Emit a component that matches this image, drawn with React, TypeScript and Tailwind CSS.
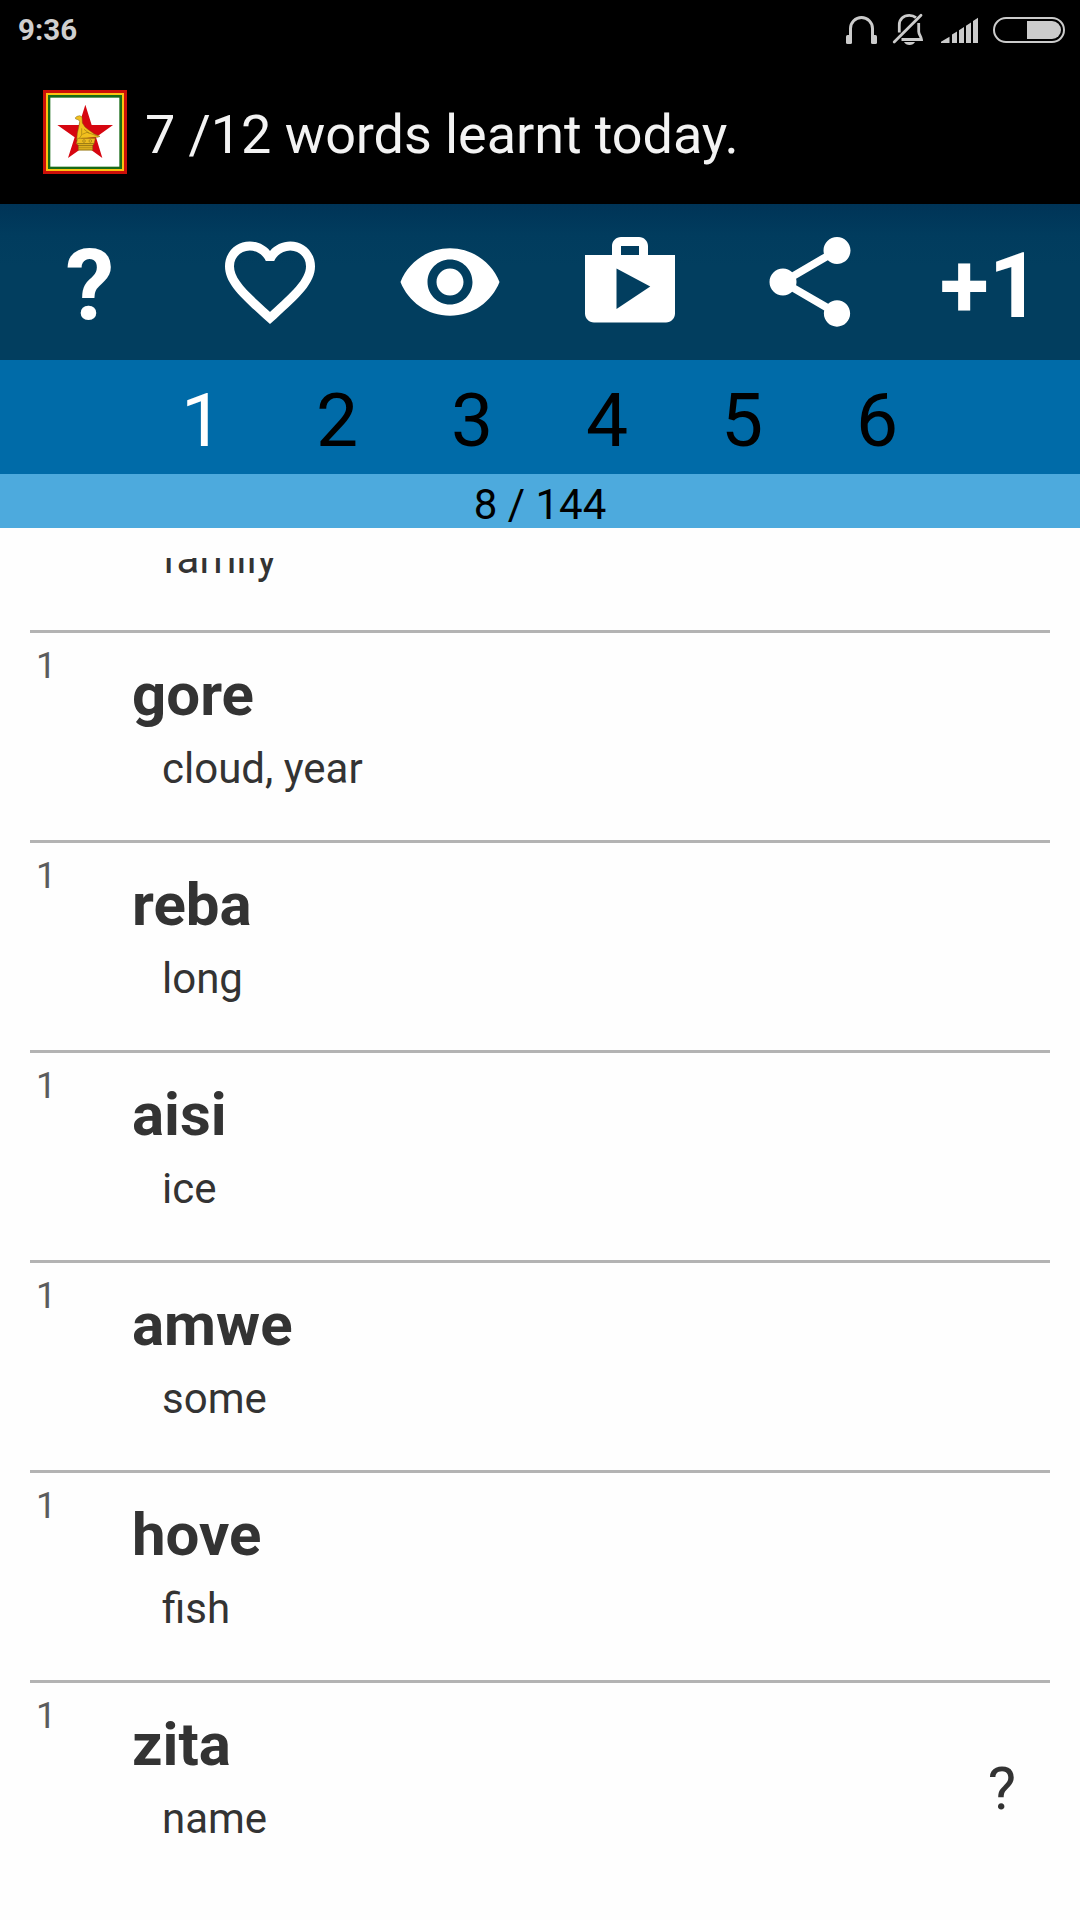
import { MdFavoriteBorder, MdShare, MdShop, MdVisibility } from 'react-icons/md';

interface Word {
  level: number;
  word: string;
  meaning: string;
  unsure?: boolean;
}

const words: Word[] = [
  { level: 1, word: 'gore', meaning: 'cloud, year' },
  { level: 1, word: 'reba', meaning: 'long' },
  { level: 1, word: 'aisi', meaning: 'ice' },
  { level: 1, word: 'amwe', meaning: 'some' },
  { level: 1, word: 'hove', meaning: 'fish' },
  { level: 1, word: 'zita', meaning: 'name', unsure: true },
];

const levels = [1, 2, 3, 4, 5, 6];
const activeLevel = 1;

function StatusIcons() {
  return (
    <svg width="260" height="60" viewBox="0 0 260 60" fill="#cbcbcb">
      {/* Headphones */}
      <path d="M30.5 42V28.5a11 11 0 0 1 22 0V42" fill="none" stroke="#cbcbcb" strokeWidth="3" />
      <rect x="26" y="35" width="6" height="9" rx="1.5" />
      <rect x="51" y="35" width="6" height="9" rx="1.5" />
      {/* Muted bell */}
      <g fill="none" stroke="#cbcbcb" strokeWidth="2.8">
        <path d="M79.3 32.5V25c0-5.600 4-9.600 10-9.600 3 0 5 .8 6.700 2.200" />
        <path d="M98.700 23v8.500c0 3 2.600 5 2.800 8H81.500" />
        <path d="M74.200 42 101 15.200" strokeLinecap="round" />
      </g>
      <path d="M84 42h11c-1 2-3 3-5.500 3S85 44 84 42z" />
      {/* Signal */}
      <path d="M121 43v-1.200l8.500-5V43zM132 43v-8.500l5-3V43zM139 43V30.300l5-3.300V43zM146 43V25.700l5-3.200V43zM153 43V21l5-3.200V43z" />
      {/* Battery */}
      <rect x="174" y="18" width="70" height="24" rx="12" fill="none" stroke="#cbcbcb" strokeWidth="2" />
      <path d="M207 21h25a9 9 0 0 1 0 18h-25z" />
    </svg>
  );
}

function AppIcon() {
  return (
    <svg width="84" height="84" viewBox="21 18 252 252" className="shrink-0">
      <rect x="21" y="18" width="252" height="252" fill="#cc1008" />
      <rect x="30" y="27" width="234" height="234" fill="#fbc211" />
      <rect x="36" y="33" width="222" height="222" fill="#176b17" />
      <rect x="43" y="41" width="207" height="207" fill="#fff" />
      <path
        d="M148 62 167 123H231L180 160 199 222 148 185 96 222 116 160 64 123H129z"
        fill="#d60610"
      />
      {/* Zimbabwe bird */}
      <g stroke="#7a6010" strokeWidth="1.400" strokeLinejoin="round">
        <path
          d="M118 101 123 97Q132 92 138 99L139 117Q146 131 157 137L175 150 192 157 185 160H174L153 162 137 163 130 171 122 168 124 148 128 130 131 113 127 107 119 105z"
          fill="#f2c01e"
        />
        <path d="M125 163H178L174 180 170 184V199H127V184L121 179z" fill="#ecbb1f" />
        <path d="M137 133V153L130 163M139 151 153 145 187 157M144 136 160 148" fill="none" />
        <path d="M123 179H174M126 185H171" fill="none" strokeWidth="2.400" />
        <path d="M127 191H171M127 196H170" fill="none" />
        <circle cx="144" cy="171" r="4" fill="none" />
        <circle cx="163" cy="171" r="4" fill="none" />
      </g>
    </svg>
  );
}

function WordRow({ item }: { item: Word }) {
  return (
    <li className="flex h-[210px] border-t-[3px] border-[#b3b3b3]">
      <span className="w-[102px] shrink-0 pt-[15px] pl-1.5 text-[36px] leading-[36px] text-[#5c5c5c]">
        {item.level}
      </span>
      <div className="pt-8">
        <h2 className="text-[60px] leading-[60px] font-bold">{item.word}</h2>
        <p className="mt-5 pl-[30px] text-[42px] leading-[48px]">{item.meaning}</p>
      </div>
      {item.unsure && (
        <button className="mt-[76px] mr-[34px] ml-auto self-start text-[60px] leading-[60px]">?</button>
      )}
    </li>
  );
}

export default function App() {
  return (
    <div className="flex h-[1920px] w-[1080px] flex-col overflow-hidden bg-[#fefefe] font-['Roboto',sans-serif] text-[#333333]">
      <div className="flex h-[60px] items-center justify-between bg-black">
        <span className="pt-0.5 pl-[18px] text-[29.5px] leading-none font-bold text-[#cfcfcf]">9:36</span>
        <StatusIcons />
      </div>

      <header className="flex h-[144px] items-center bg-black pl-[43px]">
        <AppIcon />
        <h1 className="pt-[5px] pl-[18px] text-[54px] leading-none tracking-[-0.08px] whitespace-nowrap text-[#f3f3f3]">
          7 /12 words learnt today.
        </h1>
      </header>

      {/* Toolbar */}
      <nav className="grid h-[156px] grid-cols-6 items-center justify-items-center bg-linear-to-b from-[#003457] via-[#013c5e] via-20% to-[#023e5f] to-40% text-white">
        <button className="pt-[7px] text-[98px] leading-none font-bold">?</button>
        <MdFavoriteBorder size={108} />
        <MdVisibility size={108} />
        <MdShop size={108} />
        <MdShare size={108} />
        <button className="pt-2.5 text-[90px] leading-none font-bold">+1</button>
      </nav>

      {/* Levels */}
      <div className="flex h-[114px] items-center justify-center bg-[#006ba8] pt-[7px] pr-px">
        {levels.map((level) => (
          <button
            key={level}
            className={`w-[135px] text-center text-[75px] leading-none ${
              level === activeLevel ? 'text-white' : 'text-black'
            }`}
          >
            {level}
          </button>
        ))}
      </div>

      <div className="flex h-[54px] items-center justify-center bg-[#4daadd] pt-[7px] text-[42px] leading-none text-black">
        8 / 144
      </div>

      {/* Word list, scrolled past the first entry */}
      <main className="mx-[30px] mt-[30px] overflow-hidden">
        <div className="h-[72px] overflow-hidden">
          <p className="-mt-[23px] pl-[132px] text-[42px] leading-[48px]">family</p>
        </div>
        <ul>
          {words.map((item) => (
            <WordRow key={item.word} item={item} />
          ))}
        </ul>
      </main>
    </div>
  );
}
